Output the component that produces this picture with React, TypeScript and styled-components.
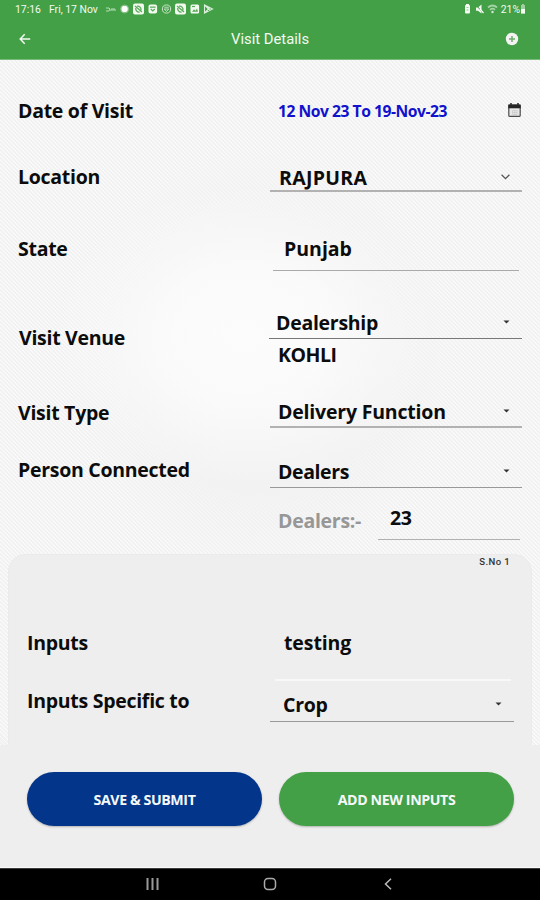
import React from "react";
import styled, { createGlobalStyle, css } from "styled-components";

const GlobalStyle = createGlobalStyle`
  * { box-sizing: border-box; }
  body { margin: 0; background: #000; }
`;

const Screen = styled.main`
  width: 540px;
  height: 900px;
  display: flex;
  flex-direction: column;
  overflow: hidden;
  color: #0c0c0c;
  font-family: "Open Sans", "Noto Sans", sans-serif;
`;

const Header = styled.header`
  flex: none;
  height: 60px;
  background: #43a047;
  color: #f3faf2;
  font-family: Roboto, sans-serif;
  border-bottom: 1px solid #7cbb7d;
`;

const StatusBar = styled.div`
  display: flex;
  justify-content: space-between;
  height: 18px;
  padding: 0 14px 0 15px;
  font-size: 10.4px;
  line-height: 17px;
`;

const StatusGroup = styled.div`
  display: flex;
  align-items: center;
  svg { display: block; }
`;

const Clock = styled.span`
  width: 34px;
`;

const StatusDate = styled.span`
  width: 57px;
  white-space: nowrap;
`;

const AppBar = styled.div`
  display: grid;
  grid-template-columns: 40px 1fr 40px;
  align-items: center;
  height: 41px;
  padding: 0 8px 0 5px;
`;

const IconButton = styled.button`
  display: flex;
  align-items: center;
  justify-content: center;
  height: 36px;
  padding: 0;
  border: 0;
  background: none;
  color: inherit;
`;

const Title = styled.h1`
  margin: 0;
  font-size: 14.8px;
  font-weight: 400;
  text-align: center;
  padding-left: 3px;
`;

const Form = styled.section`
  flex: none;
  height: 685px;
  padding-top: 36px;
  overflow: hidden;
  background:
    radial-gradient(ellipse 190px 150px at 245px 275px, #fcfcfc 0%, rgba(251, 251, 251, 0.9) 45%, rgba(247, 247, 247, 0) 100%),
    radial-gradient(ellipse 190px 210px at 260px 300px, rgba(242, 242, 242, 0.9) 60%, rgba(242, 242, 242, 0) 100%),
    repeating-linear-gradient(45deg, #f9f9f9 0 1.41px, #f1f1f1 1.41px 2.83px);
`;

const Row = styled.div<{ $height: number; $gap: number; $carded?: boolean }>`
  display: grid;
  grid-template-columns: ${(p) => (p.$carded ? 242 : 251)}px 1fr;
  height: ${(p) => p.$height}px;
  margin-bottom: ${(p) => p.$gap}px;
  padding-left: 18px;
`;

const strongText = css`
  font-size: 19.5px;
  font-weight: 700;
  line-height: 26px;
  white-space: nowrap;
`;

const Label = styled.label<{ $shift?: number; $raise?: number }>`
  ${strongText}
  align-self: center;
  letter-spacing: -0.28px;
  padding: 0 0 ${(p) => p.$raise ?? 0}px ${(p) => p.$shift ?? 0}px;
`;

const Field = styled.div<{
  $left: number;
  $width: number;
  $height: number;
  $pad: number;
  $line: string;
  $thick?: number;
  $lift: number;
}>`
  display: flex;
  align-items: flex-end;
  justify-content: space-between;
  align-self: end;
  width: ${(p) => p.$width}px;
  height: ${(p) => p.$height}px;
  margin-left: ${(p) => p.$left}px;
  padding: 0 12px ${(p) => p.$lift}px ${(p) => p.$pad}px;
  border-bottom: ${(p) => p.$thick ?? 1}px solid ${(p) => p.$line};
`;

const Value = styled.span<{ $track?: number; $muted?: boolean }>`
  ${strongText}
  line-height: 24px;
  letter-spacing: ${(p) => p.$track ?? -0.28}px;
  color: ${(p) => (p.$muted ? "#979797" : "inherit")};
`;

const IconSlot = styled.span`
  display: flex;
  align-items: center;
  height: 26px;
`;

const DateField = styled.div`
  display: flex;
  align-items: center;
  justify-content: space-between;
  padding: 0 19px 0 9px;
`;

const DateText = styled.span`
  color: #1212cd;
  font-size: 15.7px;
  font-weight: 700;
  letter-spacing: -0.49px;
  white-space: nowrap;
`;

const Venue = styled.div`
  height: 32px;
  padding: 4px 0 0 9px;
`;

const Count = styled.div`
  display: flex;
  padding-left: 9px;
`;

const CountLabel = styled.div`
  width: 100px;
  padding-top: 9px;
`;

const Card = styled.section`
  height: 230px;
  margin: 0 8px;
  border: 1px solid #ebebeb;
  border-radius: 18px 18px 0 0;
  background: #eee;
`;

const Serial = styled.div`
  height: 73px;
  padding: 0 21px 0 0;
  color: #333;
  font: 500 9.5px/13px Roboto, sans-serif;
  letter-spacing: 0.4px;
  text-align: right;
`;

const Footer = styled.footer`
  flex: none;
  display: flex;
  gap: 17px;
  height: 123px;
  padding: 27px 26px 0 27px;
  background: #eee;
  border-bottom: 1px solid #fafafa;
`;

const Pill = styled.button<{ $color: string }>`
  flex: 1;
  height: 54px;
  padding: 0;
  border: 0;
  border-radius: 27px;
  background: ${(p) => p.$color};
  color: #f5f8fa;
  box-shadow: 0 1px 2px rgba(0, 0, 0, 0.25);
  font: 700 14.2px "Open Sans", "Noto Sans", sans-serif;
  letter-spacing: -0.4px;
`;

const NavBar = styled.nav`
  flex: none;
  display: grid;
  grid-template-columns: 118px 118px 118px;
  justify-content: center;
  align-items: center;
  justify-items: center;
  height: 32px;
  padding-bottom: 1px;
  background: #000;
  border-top: 1px solid #3a3a3a;
`;

const Caret = () => (
  <svg width="7" height="4" viewBox="0 0 7 4">
    <path d="M.5.5h6L3.500 3.500z" fill="#333" />
  </svg>
);

const Chevron = () => (
  <svg width="9" height="6" viewBox="0 0 9 6" fill="none" stroke="#555" strokeWidth="1.3">
    <path d="M.6.8 4.500 4.700 8.400.8" />
  </svg>
);

const NotificationIcons = () => (
  <svg width="108" height="12" viewBox="0 0 108 12" fill="none">
    <path d="M0 5h3l1 1-1 2H0m5-2h4M5 8V6m2 2V6m2 2V6" stroke="#b9dcb9" strokeWidth="1" />
    <circle cx="18.600" cy="6" r="3.300" fill="#fff" />
    <circle cx="18.600" cy="6" r="4" stroke="#a9d3a9" strokeWidth=".7" />
    <rect x="27" y="0.500" width="11" height="11" rx="2" fill="#f2faf0" />
    <path d="m29 3 7 6M31 3.200a3.500 3.500 0 0 1 4 4M29.700 5a3.500 3.500 0 0 0 4 4" stroke="#57a957" strokeWidth="1.200" />
    <rect x="42.500" y="1.500" width="8.600" height="9" rx="2" fill="#f2faf0" />
    <path d="M44 4.200h5.600M44.800 6l2 2 2-2" stroke="#57a957" strokeWidth="1.200" />
    <circle cx="60.500" cy="6" r="4.100" stroke="#c9e4c8" />
    <path d="M58.200 4.200h4.600M58.200 6h4.600l-2.300 2.500z" stroke="#c9e4c8" strokeWidth=".9" />
    <rect x="69" y="0.500" width="11" height="11" rx="2" fill="#f2faf0" />
    <path d="m71 3 7 6M73 3.200a3.500 3.500 0 0 1 4 4M71.700 5a3.500 3.500 0 0 0 4 4" stroke="#57a957" strokeWidth="1.200" />
    <rect x="84.500" y="1.500" width="8.600" height="9" rx="1.500" fill="#f2faf0" />
    <path d="m86 8.700 2-2.500 1.500 1.500L91 5.500l1 3.200z" fill="#57a957" />
    <path d="M86 3.500h3" stroke="#57a957" strokeWidth="1.200" />
    <path d="M98.500 2v8l8-4zM99 2.500l5 5M99 9.500l5-5" stroke="#d9eed8" strokeWidth="1.100" />
  </svg>
);

const DeviceIcons = () => (
  <svg width="37" height="12" viewBox="0 0 37 12">
    <path d="M1 3q0-1 1-1V1h3v1q1 0 1 1v6.500q0 1-1 1H2q-1 0-1-1z" fill="#f4fbf3" />
    <path d="M2.500 4.500h2M2.500 7h2" stroke="#8cc68c" strokeWidth=".9" />
    <path d="M12 4.500h2L17.500 1.500v9L14 7.800h-2z" fill="#f4fbf3" />
    <path d="m12 2 7 7.800" stroke="#43a047" strokeWidth="1" />
    <path d="m16 6 3.500 4" stroke="#f4fbf3" strokeWidth="1.200" />
    <path d="M24 4.500q4.500-4 9 0M26 6.800q2.500-2.200 5 0" fill="none" stroke="#a5d2a5" strokeWidth="1.700" />
    <circle cx="28.500" cy="9" r="1.200" fill="#d4ebd3" />
  </svg>
);

const BatteryIcon = () => (
  <svg width="6" height="10" viewBox="0 0 6 10">
    <path d="M2 0h2v1h1v8.500H1V1h1z" fill="#9fce9f" />
    <path d="M1 5h4v4.500H1z" fill="#f4fbf3" />
  </svg>
);

const BackArrow = () => (
  <svg width="12" height="12" viewBox="0 0 12 12" fill="none" stroke="currentColor" strokeWidth="1.500">
    <path d="M11.200 6H1.500M5.700 1.200 1.200 6 5.700 10.800" />
  </svg>
);

const AddIcon = () => (
  <svg width="14" height="14" viewBox="0 0 14 14">
    <circle cx="7" cy="7" r="6.200" fill="#f4f2f3" />
    <path d="M7 4v6M4 7h6" stroke="#6dac6c" strokeWidth="1.500" />
  </svg>
);

const CalendarIcon = () => (
  <svg width="13" height="17" viewBox="0 0 13 17">
    <path d="M3 0v3M10 0v3" stroke="#222" strokeWidth="1.500" />
    <rect x=".8" y="2" width="11.400" height="11.400" rx="1" fill="#e8e8e8" stroke="#4d4d4d" strokeWidth="1.200" />
    <path d="M.3 1.500h12.400v3.800H.3z" fill="#262626" />
    <path d="M4.500 7.500h4.500v4H4.500zM6.700 7.500v4M4.500 9.500h4.500" fill="none" stroke="#ccc" strokeWidth=".8" />
  </svg>
);

export default function App() {
  return (
    <>
      <GlobalStyle />
      <Screen>
        <Header>
          <StatusBar>
            <StatusGroup>
              <Clock>17:16</Clock>
              <StatusDate>Fri, 17 Nov</StatusDate>
              <NotificationIcons />
            </StatusGroup>
            <StatusGroup>
              <DeviceIcons />
              <span>21%</span>
              <BatteryIcon />
            </StatusGroup>
          </StatusBar>
          <AppBar>
            <IconButton aria-label="Back"><BackArrow /></IconButton>
            <Title>Visit Details</Title>
            <IconButton aria-label="Add"><AddIcon /></IconButton>
          </AppBar>
        </Header>

        <Form>
          <Row $height={30} $gap={36}>
            <Label>Date of Visit</Label>
            <DateField>
              <DateText>12 Nov 23 To 19-Nov-23</DateText>
              <CalendarIcon />
            </DateField>
          </Row>
          <Row $height={30} $gap={34}>
            <Label>Location</Label>
            <Field $left={1} $width={252} $height={30} $pad={9} $line="#b2b2b2" $thick={2} $lift={0}>
              <Value $track={0.3}>RAJPURA</Value>
              <IconSlot><Chevron /></IconSlot>
            </Field>
          </Row>
          <Row $height={45} $gap={33}>
            <Label>State</Label>
            <Field $left={4} $width={246} $height={40} $pad={11} $line="#aaa" $lift={9}>
              <Value $track={0}>Punjab</Value>
            </Field>
          </Row>
          <Row $height={68} $gap={25}>
            <Label $shift={1}>Visit Venue</Label>
            <div>
              <Field $left={0} $width={253} $height={35} $pad={7} $line="#777" $lift={3}>
                <Value>Dealership</Value>
                <IconSlot><Caret /></IconSlot>
              </Field>
              <Venue><Value $track={-0.5}>KOHLI</Value></Venue>
            </div>
          </Row>
          <Row $height={31} $gap={24}>
            <Label>Visit Type</Label>
            <Field $left={1} $width={252} $height={31} $pad={8} $line="#b2b2b2" $thick={2} $lift={2}>
              <Value $track={-0.2}>Delivery Function</Value>
              <IconSlot><Caret /></IconSlot>
            </Field>
          </Row>
          <Row $height={36} $gap={12}>
            <Label>Person Connected</Label>
            <Field $left={1} $width={252} $height={36} $pad={8} $line="#999" $lift={3}>
              <Value $track={-0.4}>Dealers</Value>
              <IconSlot><Caret /></IconSlot>
            </Field>
          </Row>
          <Row $height={40} $gap={14}>
            <span />
            <Count>
              <CountLabel><Value $muted>Dealers:-</Value></CountLabel>
              <Field $left={0} $width={142} $height={40} $pad={12} $line="#b0b0b0" $lift={9}>
                <Value>23</Value>
              </Field>
            </Count>
          </Row>
          <Card>
            <Serial>S.No 1</Serial>
            <Row $height={53} $gap={5} $carded>
              <Label $raise={24}>Inputs</Label>
              <Field $left={6} $width={236} $height={53} $pad={9} $line="#f8f8f8" $thick={2} $lift={24}>
                <Value $track={-0.1}>testing</Value>
              </Field>
            </Row>
            <Row $height={36} $gap={0} $carded>
              <Label $raise={6}>Inputs Specific to</Label>
              <Field $left={1} $width={244} $height={36} $pad={13} $line="#999" $lift={4}>
                <Value>Crop</Value>
                <IconSlot><Caret /></IconSlot>
              </Field>
            </Row>
          </Card>
        </Form>

        <Footer>
          <Pill $color="#03368b">SAVE &amp; SUBMIT</Pill>
          <Pill $color="#43a047">ADD NEW INPUTS</Pill>
        </Footer>
        <NavBar>
          <svg width="13" height="12" viewBox="0 0 13 12"><path d="M1.500 0v12M6.500 0v12M11.500 0v12" stroke="#999" strokeWidth="2" /></svg>
          <svg width="14" height="14" viewBox="0 0 14 14"><rect x="1.500" y="1.500" width="11" height="11" rx="3.500" fill="none" stroke="#aaa" strokeWidth="1.500" /></svg>
          <svg width="8" height="12" viewBox="0 0 8 12"><path d="M7 .8 1.500 6 7 11.200" fill="none" stroke="#bbb" strokeWidth="1.500" /></svg>
        </NavBar>
      </Screen>
    </>
  );
}
